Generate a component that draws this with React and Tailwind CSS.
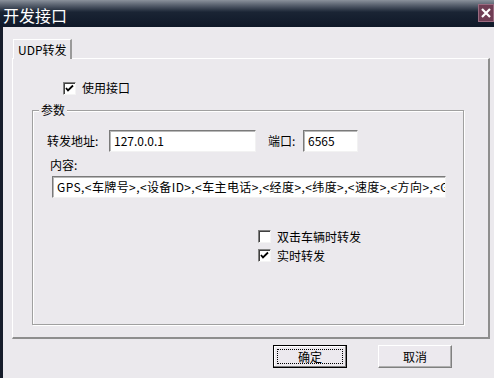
import React from 'react';

const font = { fontFamily: '"Noto Sans CJK SC", "Liberation Sans", sans-serif' };

const Check = ({ checked }) => (
  <span className="w-[13px] h-[13px] bg-white border border-t-[#808080] border-l-[#808080] border-b-[#f4f4f4] border-r-[#f4f4f4] flex items-center justify-center shrink-0 shadow-[inset_1px_1px_0_#404040]">
    {checked && (
      <svg width="9" height="9" viewBox="0 0 9 9">
        <path d="M1 4 L3 6.5 L8 1.5" stroke="#000" strokeWidth="1.8" fill="none" />
      </svg>
    )}
  </span>
);

const Field = ({ className, children }) => (
  <div className={`h-[22px] bg-white border border-t-[#7a7a7a] border-l-[#7a7a7a] border-b-[#f2f2f2] border-r-[#f2f2f2] shadow-[inset_1px_1px_0_#b8b8b8] flex items-center pl-[4px] text-[12px] text-black overflow-hidden whitespace-nowrap ${className}`}>
    {children}
  </div>
);

const Btn = ({ def, children }) => (
  <button className={`w-[74px] h-[23px] bg-[#ece9ee] text-[12px] text-black flex items-center justify-center ${def ? 'border border-black shadow-[inset_-1px_-1px_0_#808080,inset_1px_1px_0_#fff]' : 'border border-t-white border-l-white border-b-[#808080] border-r-[#808080] shadow-[inset_-1px_-1px_0_#b0b0b0]'}`}>
    {def ? (
      <span className="w-[66px] h-[15px] border border-dotted border-black flex items-center justify-center">{children}</span>
    ) : children}
  </button>
);

export default function App() {
  return (
    <div className="w-[494px] h-[378px] bg-[#ebe9ed] flex flex-col overflow-hidden" style={font}>
      {/* title bar */}
      <div className="h-[27px] bg-gradient-to-b from-[#8b929c] via-[#1a2434] via-45% to-[#0f1828] flex items-center justify-between">
        <span className="text-white text-[16px] pl-[3px] pt-[2px] leading-none">开发接口</span>
        <div className="w-[16px] h-[18px] mb-[2px] bg-[#6f3d54] border border-[#9a6a80] flex items-center justify-center">
          <svg width="12" height="12" viewBox="0 0 12 12">
            <path d="M2 2 L10 10 M10 2 L2 10" stroke="#fff" strokeWidth="2.2" />
          </svg>
        </div>
      </div>

      <div className="flex-1 border-l-[3px] border-[#161c2a] pl-[9px] pt-[12px]">
        {/* tab */}
        <div className="ml-[1px] w-[59px] h-[20px] border-l border-t border-white border-r-2 border-r-[#9a9a9a] text-[12px] flex items-center pl-[4px] relative -mb-px z-10 bg-[#ebe9ed]">
          UDP转发
        </div>
        {/* panel */}
        <div className="w-[478px] h-[281px] border-l border-t border-white border-r-2 border-b-2 border-r-[#8e8e8e] border-b-[#8e8e8e] pt-[22px]">
          <div className="ml-[50px] flex items-center gap-[6px] text-[12px] h-[14px]">
            <Check checked />
            <span>使用接口</span>
          </div>

          {/* group box */}
          <div className="relative ml-[19px] mt-[15px] w-[432px] h-[215px] border border-[#a0a0a0] shadow-[1px_1px_0_#fff,inset_1px_1px_0_#fff]">
            <span className="absolute -top-[9px] left-[6px] px-[2px] bg-[#ebe9ed] text-[12px] leading-[16px]">参数</span>
            <div className="pt-[19px] pl-[14px]">
              <div className="flex items-center text-[12px]">
                <span className="w-[62px]">转发地址:</span>
                <Field className="w-[147px]">127.0.0.1</Field>
                <span className="ml-[12px] w-[35px]">端口:</span>
                <Field className="w-[55px]">6565</Field>
              </div>
              <div className="text-[12px] mt-[4px] ml-[3px] leading-[18px]">内容:</div>
              <Field className="w-[394px] ml-[5px] mt-[2px] h-[21px] pl-[3px] tracking-[0.4px]">
                GPS,&lt;车牌号&gt;,&lt;设备ID&gt;,&lt;车主电话&gt;,&lt;经度&gt;,&lt;纬度&gt;,&lt;速度&gt;,&lt;方向&gt;,&lt;GPS时间&gt;
              </Field>
              <div className="ml-[211px] mt-[32px] flex flex-col gap-[6px] text-[12px]">
                <div className="flex items-center gap-[6px] h-[13px]">
                  <Check />
                  <span>双击车辆时转发</span>
                </div>
                <div className="flex items-center gap-[6px] h-[13px]">
                  <Check checked />
                  <span>实时转发</span>
                </div>
              </div>
            </div>
          </div>
        </div>

        {/* buttons */}
        <div className="flex gap-[31px] ml-[261px] mt-[6px]">
          <Btn def>确定</Btn>
          <Btn>取消</Btn>
        </div>
      </div>
    </div>
  );
}
